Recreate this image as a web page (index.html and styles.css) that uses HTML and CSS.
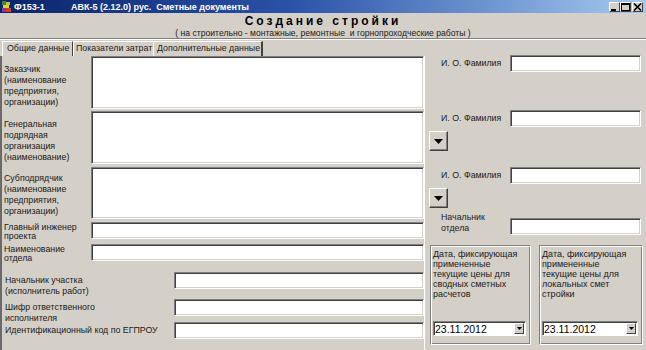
FILE: index.html
```html
<!DOCTYPE html>
<html lang="ru">
<head>
<meta charset="utf-8">
<title>Создание стройки</title>
<link rel="stylesheet" href="styles.css">
</head>
<body>
<div class="window">
  <div class="titlebar">
    <svg class="appicon" width="9" height="11" viewBox="0 0 9 11">
      <rect x="0" y="0" width="4" height="4" fill="#3a8a3a"/>
      <rect x="4" y="1" width="4" height="3" fill="#c8c040"/>
      <rect x="1" y="4" width="6" height="3" fill="#e0d030"/>
      <rect x="0" y="7" width="4" height="4" fill="#8040a0"/>
      <rect x="4" y="7" width="5" height="4" fill="#d04020"/>
    </svg>
    <span class="tcode">Ф153-1</span>
    <span class="ttext">АВК-5 (2.12.0) рус.&nbsp; Сметные документы</span>
    <div class="tbtns">
      <span class="tbtn"><svg width="9" height="8" viewBox="0 0 9 8"><rect x="1" y="6" width="5" height="2" fill="#000"/></svg></span>
      <span class="tbtn"><svg width="9" height="8" viewBox="0 0 9 8"><rect x="0.5" y="0.5" width="8" height="7" fill="none" stroke="#000"/><rect x="0" y="0" width="9" height="2" fill="#000"/></svg></span>
      <span class="tbtn close"><svg width="9" height="8" viewBox="0 0 9 8"><path d="M1 0.5 L8 7.5 M8 0.5 L1 7.5" stroke="#000" stroke-width="1.6"/></svg></span>
    </div>
  </div>

  <div class="header">
    <div class="htitle">Создание стройки</div>
    <div class="hsub">( на строительно - монтажные, ремонтные&nbsp; и горнопроходческие работы )</div>
  </div>
  <div class="sep"></div>

  <div class="main">
    <div class="leftcol">
      <div class="tabs">
        <span class="tab t1">Общие данные</span>
        <span class="tab t2">Показатели затрат</span>
        <span class="tab t3 active">Дополнительные данные</span>
      </div>
      <div class="panel">
        <div class="row r1">
          <div class="lbl l1">Заказчик<br>(наименование<br>предприятия,<br>организации)</div>
          <div class="field area"></div>
        </div>
        <div class="row r2">
          <div class="lbl l2">Генеральная<br>подрядная<br>организация<br>(наименование)</div>
          <div class="field area"></div>
        </div>
        <div class="row r3">
          <div class="lbl l3">Субподрядчик<br>(наименование<br>предприятия,<br>организации)</div>
          <div class="field area"></div>
        </div>
        <div class="row r4">
          <div class="lbl tight">Главный инженер<br>проекта</div>
          <div class="field input"></div>
        </div>
        <div class="row r5">
          <div class="lbl tight">Наименование<br>отдела</div>
          <div class="field input"></div>
        </div>
        <div class="row r6 wide">
          <div class="lbl wl l6">Начальник участка<br>(исполнитель работ)</div>
          <div class="field input wf"></div>
        </div>
        <div class="row r7 wide">
          <div class="lbl wl l7">Шифр ответственного<br>исполнителя</div>
          <div class="field input wf"></div>
        </div>
        <div class="row r8 wide">
          <div class="lbl wl l8">Идентификационный код по ЕГПРОУ</div>
          <div class="field input wf"></div>
        </div>
      </div>
    </div>

    <div class="rightcol">
      <div class="rrow ra">
        <div class="rlbl">И. О. Фамилия</div>
        <div class="rfield input"></div>
      </div>
      <div class="rrow rb">
        <div class="rlbl">И. О. Фамилия</div>
        <div class="rfield input"></div>
      </div>
      <div class="arrowbtn ab1"><svg width="9" height="5" viewBox="0 0 9 5"><path d="M0 0 H9 L4.5 5 Z" fill="#000"/></svg></div>
      <div class="rrow rc">
        <div class="rlbl">И. О. Фамилия</div>
        <div class="rfield input"></div>
      </div>
      <div class="arrowbtn ab2"><svg width="9" height="5" viewBox="0 0 9 5"><path d="M0 0 H9 L4.5 5 Z" fill="#000"/></svg></div>
      <div class="rrow rd">
        <div class="rlbl two">Начальник<br>отдела</div>
        <div class="rfield input"></div>
      </div>
      <div class="groups">
        <div class="group g1">
          <div class="gtext">Дата, фиксирующая<br>примененные<br>текущие цены для<br>сводных сметных<br>расчетов</div>
          <div class="combo">
            <span class="cval">23.11.2012</span>
            <span class="cbtn"><svg width="5" height="3" viewBox="0 0 5 3"><path d="M0 0 H5 L2.5 3 Z" fill="#000"/></svg></span>
          </div>
        </div>
        <div class="group g2">
          <div class="gtext">Дата, фиксирующая<br>примененные<br>текущие цены для<br>локальных смет<br>стройки</div>
          <div class="combo">
            <span class="cval">23.11.2012</span>
            <span class="cbtn"><svg width="5" height="3" viewBox="0 0 5 3"><path d="M0 0 H5 L2.5 3 Z" fill="#000"/></svg></span>
          </div>
        </div>
      </div>
    </div>
  </div>
</div>
</body>
</html>
```

FILE: styles.css
```css
* { box-sizing: border-box; }
html, body { margin: 0; padding: 0; }
body {
  width: 646px;
  height: 350px;
  overflow: hidden;
  background: #d4d0c8;
  font-family: "Liberation Sans", Arial, sans-serif;
  font-size: 8.8px;
  color: #1a1a1a;
}
.window { width: 646px; height: 350px; position: relative; }

.titlebar {
  height: 13px;
  display: flex;
  align-items: center;
  background: linear-gradient(to right, #0a246a 0%, #2a52a8 45%, #a6caf0 100%);
  color: #fff;
  font-weight: bold;
  font-size: 9px;
}
.appicon { margin-left: 2px; }
.tcode { margin-left: 3px; width: 57px; }
.ttext { white-space: nowrap; }
.tbtns { margin-left: auto; display: flex; gap: 0; margin-right: 3px; }
.tbtn {
  width: 11px; height: 10px;
  background: #d4d0c8;
  border: 1px solid;
  border-color: #fff #404040 #404040 #fff;
  display: flex; align-items: center; justify-content: center;
}
.tbtn.close { margin-left: 1px; }

.header { height: 25px; text-align: center; }
.htitle {
  font-size: 12px;
  font-weight: bold;
  letter-spacing: 3px;
  line-height: 14px;
  padding-top: 1px;
  color: #000;
}
.hsub { font-size: 8.6px; line-height: 10px; }
.sep { height: 2px; border-top: 1px solid #808080; border-bottom: 1px solid #fff; }

.main { display: flex; }
.leftcol { width: 425px; }
.tabs { display: flex; height: 16px; padding-left: 2px; padding-top: 1px; }
.tab {
  height: 15px;
  line-height: 13px;
  border-top: 1px solid #fff;
  white-space: nowrap;
  font-size: 8.8px;
  overflow: hidden;
}
.t1 { width: 71px; border-left: 1px solid #fff; border-right: 1px solid #404040; padding-left: 4px; }
.t2 { width: 80px; border-left: 1px solid #fff; padding-left: 2px; }
.t3 { width: 110px; border-left: 1px solid #fff; border-right: 2px solid #404040; padding-left: 3px; }

.panel {
  height: 294px;
  border-left: 2px solid #6a6a6a;
  border-right: 1px solid #fff;
  padding-left: 2px;
}
.row { display: flex; }
.lbl { width: 87px; line-height: 11px; white-space: nowrap; }
.field { width: 333px; background: #fff; }
.area, .input, .rfield {
  border: 1px solid;
  border-color: #808080 #fff #fff #808080;
  box-shadow: inset 1px 1px 0 #404040, inset -1px -1px 0 #d4d0c8;
  background: #fff;
}
.r1 { height: 53px; }
.r2 { height: 53px; margin-top: 2px; }
.r3 { height: 52px; margin-top: 3px; }
.r4 { height: 17px; margin-top: 3px; }
.r5 { height: 17px; margin-top: 5px; }
.r6 { height: 17px; margin-top: 11px; }
.r7 { height: 17px; margin-top: 10px; }
.r8 { height: 17px; margin-top: 6px; }
.l1 { padding-top: 8px; }
.l2 { padding-top: 8px; }
.l3 { padding-top: 6px; }
.tight { line-height: 9px; padding-top: 1px; }
.wl { width: 170px; padding-left: 1px; }
.l6 { padding-top: 3px; }
.l7 { padding-top: 3px; }
.l8 { padding-top: 3px; }
.wf { width: 250px; }

.rightcol { flex: 1; padding-top: 15px; }
.rrow { display: flex; height: 17px; }
.rlbl { width: 69px; margin-left: 16px; padding-top: 3px; white-space: nowrap; }
.rlbl.two { line-height: 11px; padding-top: 0; margin-top: -6px; }
.rfield { width: 131px; }
.rb { margin-top: 38px; }
.rc { margin-top: 16px; }
.rd { margin-top: 10px; }
.arrowbtn {
  width: 19px; height: 20px;
  margin-left: 4px;
  margin-top: 4px;
  background: #d4d0c8;
  border: 1px solid;
  border-color: #fff #404040 #404040 #fff;
  box-shadow: inset -1px -1px 0 #808080;
  display: flex; align-items: center; justify-content: center;
}
.groups { display: flex; margin-top: 10px; margin-left: 5px; gap: 8px; }
.group {
  height: 100px;
  border: 1px solid;
  border-color: #808080 #fff #fff #808080;
  box-shadow: inset 1px 1px 0 #fff, inset -1px -1px 0 #808080;
  padding: 3px 2px 0 2px;
  display: flex; flex-direction: column;
}
.g1 { width: 101px; }
.g2 { width: 104px; }
.gtext { line-height: 10px; height: 72px; white-space: nowrap; font-size: 9px; }
.combo {
  height: 15px;
  display: flex; align-items: center;
  background: #fff;
  border: 1px solid;
  border-color: #808080 #fff #fff #808080;
  box-shadow: inset 1px 1px 0 #404040;
  padding-left: 1px;
  margin-right: 2px;
}
.cval { font-size: 10.5px; color: #000; }
.cbtn {
  margin-left: auto;
  margin-right: 1px;
  width: 10px; height: 11px;
  background: #d4d0c8;
  border: 1px solid;
  border-color: #fff #404040 #404040 #fff;
  display: flex; align-items: center; justify-content: center;
}
```
